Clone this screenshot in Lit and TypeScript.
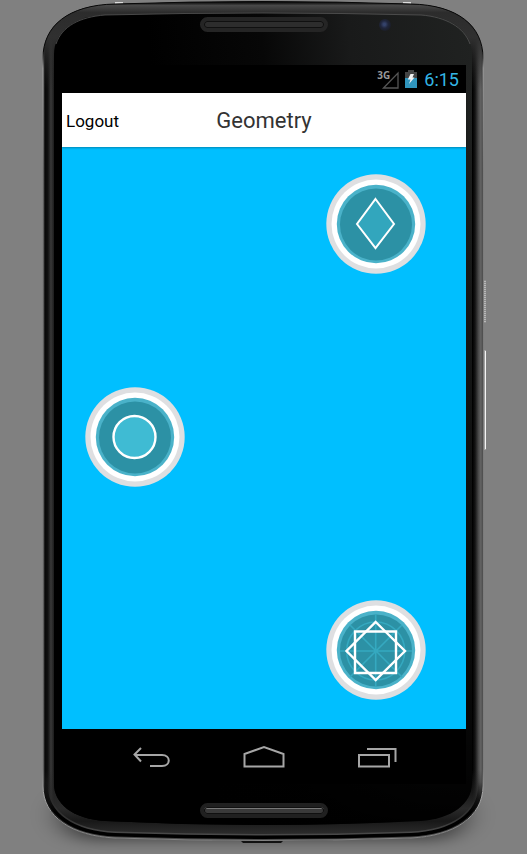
import { LitElement, html, svg, css } from "lit";
import { customElement, property } from "lit/decorators.js";

type Shape = "rhombus" | "circle" | "star";

const SHAPES: { shape: Shape; label: string; side: string }[] = [
  { shape: "rhombus", label: "Rhombus", side: "end" },
  { shape: "circle", label: "Circle", side: "start" },
  { shape: "star", label: "Star polygon", side: "end" },
];

/** Handset body: shadow, metal rim, glass and the side keys. */
@customElement("device-frame")
export class DeviceFrame extends LitElement {
  static styles = css`
    :host {
      display: block;
    }
    svg {
      display: block;
      width: 100%;
      height: 100%;
    }
  `;

  render() {
    const body =
      "M43 58 C43 26 68 5 115 4 Q263 -1 411 4 C458 5 483 26 483 58 V786 C483 817 454 836 411 838 Q263 843 115 838 C72 836 43 817 43 786 Z";
    const base = "M43 780 V786 C43 817 72 836 115 838 Q263 843 411 838 C454 836 483 817 483 786 V780";
    const glass =
      "M54 54 C54 34 72 16 105 15 Q263 11 421 15 C454 16 472 34 472 54 V784 C472 803 452 819 421 821 Q263 829 105 821 C72 819 54 803 54 784 Z";
    return html`
      <svg viewBox="0 0 527 854" preserveAspectRatio="none" aria-hidden="true">
        <defs>
          <linearGradient id="rim" x1="43" x2="483" y1="0" y2="0" gradientUnits="userSpaceOnUse">
            <stop offset="0" stop-color="#505050" />
            <stop offset="0.005" stop-color="#080808" />
            <stop offset="0.011" stop-color="#101010" />
            <stop offset="0.018" stop-color="#383838" />
            <stop offset="0.025" stop-color="#1c1c1c" />
            <stop offset="0.5" stop-color="#202020" />
            <stop offset="0.976" stop-color="#000" />
            <stop offset="0.982" stop-color="#141414" />
            <stop offset="0.99" stop-color="#4c4c4c" />
            <stop offset="0.996" stop-color="#686868" />
            <stop offset="1" stop-color="#101010" />
          </linearGradient>
          <linearGradient id="top" x1="0" x2="0" y1="2" y2="90" gradientUnits="userSpaceOnUse">
            <stop offset="0" stop-color="#080808" />
            <stop offset="0.04" stop-color="#484848" />
            <stop offset="0.12" stop-color="#2c2c2c" />
            <stop offset="0.4" stop-color="#303030" />
            <stop offset="1" stop-color="#242424" stop-opacity="0" />
          </linearGradient>
          <linearGradient id="bottom" x1="0" x2="0" y1="770" y2="834" gradientUnits="userSpaceOnUse">
            <stop offset="0" stop-color="#262626" stop-opacity="0" />
            <stop offset="0.6" stop-color="#2a2a2a" />
            <stop offset="0.8" stop-color="#181818" />
            <stop offset="1" stop-color="#2c2c2c" />
          </linearGradient>
          <linearGradient id="band" x1="0" x2="0" y1="782" y2="812" gradientUnits="userSpaceOnUse">
            <stop offset="0" stop-color="#000" stop-opacity="0" />
            <stop offset="1" stop-color="#000" />
          </linearGradient>
          <linearGradient id="lip" x1="0" x2="0" y1="800" y2="834" gradientUnits="userSpaceOnUse">
            <stop offset="0" stop-color="#484848" stop-opacity="0" />
            <stop offset="1" stop-color="#484848" />
          </linearGradient>
          <linearGradient id="shine" x1="150" x2="472" y1="60" y2="30" gradientUnits="userSpaceOnUse">
            <stop offset="0" stop-color="#000" />
            <stop offset="0.35" stop-color="#070707" />
            <stop offset="0.62" stop-color="#191a1a" />
            <stop offset="1" stop-color="#202221" />
          </linearGradient>
          <linearGradient id="fade" x1="0" x2="0" y1="80" y2="830" gradientUnits="userSpaceOnUse">
            <stop offset="0" stop-color="#000" stop-opacity="0" />
            <stop offset="0.85" stop-color="#000" stop-opacity="0.75" />
            <stop offset="1" stop-color="#000" />
          </linearGradient>
          <linearGradient id="edge" x1="0" x2="0" y1="0" y2="854" gradientUnits="userSpaceOnUse">
            <stop offset="0" stop-color="#080808" />
            <stop offset="0.06" stop-color="#080808" />
            <stop offset="0.08" stop-color="#a0a0a0" />
            <stop offset="0.2" stop-color="#777" />
            <stop offset="0.9" stop-color="#777" />
            <stop offset="0.93" stop-color="#aaa" />
            <stop offset="1" stop-color="#777" />
          </linearGradient>
          <clipPath id="inside"><path d=${body} /></clipPath>
          <filter id="soft" x="-20%" y="-100%" width="140%" height="300%">
            <feGaussianBlur stdDeviation="14 7" />
          </filter>
        </defs>
        <rect x="60" y="790" width="406" height="50" rx="30" fill="#000" opacity="0.5" filter="url(#soft)" />
        <path d="M484 280h2v43h-2z" fill="#8f8f8f" />
        <path d="M485 281v41" stroke="#e2e2e2" stroke-dasharray="1 1" />
        <path d="M484 350h2v100h-2z" fill="#a0a0a0" />
        <path d="M485.500 351v98" stroke="#f4f4f4" />
        <path d="M239 839h46l-4 4h-38z" fill="#111" />
        <path d="M115 3h8M403 3h8" stroke="#ddd" stroke-width="2" />
        <path d=${body} fill="url(#rim)" />
        <path d=${body} fill="url(#top)" />
        <path d=${body} fill="url(#bottom)" />
        <g clip-path="url(#inside)" fill="none">
          <path d=${base} stroke="url(#lip)" stroke-width="13" />
          <path d=${base} stroke="url(#band)" stroke-width="10" />
          <path d=${base} stroke="url(#lip)" stroke-width="3" />
        </g>
        <path d=${body} fill="none" stroke="url(#edge)" />
        <path d=${glass} fill="url(#shine)" />
        <path d=${glass} fill="url(#fade)" />
        <path d="M56 44 C62 26 80 17 105 15 Q263 11 421 15 C446 17 464 27 470 44" fill="none" stroke="#555" stroke-opacity="0.8" />
      </svg>
    `;
  }
}

/** Round badge with a geometric figure in its centre. */
@customElement("shape-badge")
export class ShapeBadge extends LitElement {
  @property() shape: Shape = "circle";
  @property() label = "";

  static styles = css`
    :host {
      display: block;
    }
    button {
      display: block;
      width: 100px;
      height: 100px;
      padding: 0;
      border: 0;
      border-radius: 50%;
      background: none;
      cursor: pointer;
    }
    svg {
      display: block;
    }
  `;

  private figure() {
    switch (this.shape) {
      case "rhombus":
        return svg`<path d="M49.5 25 L68 50 L49.5 74 L31 50 Z" fill="#32a6bd" stroke="#fff" stroke-width="2" />`;
      case "circle":
        return svg`<circle cx="49.5" cy="50" r="21" fill="#3fbbd3" stroke="#fff" stroke-width="2.4" />`;
      default:
        return svg`
          <g fill="none" stroke="#35a9c0" stroke-width="1.6">
            <circle cx="49.7" cy="51" r="29" />
            <path d="M49.7 14 V87 M14 51 H86 M24 25 L76 77 M76 25 L24 77" />
          </g>
          <g fill="none" stroke="#fff" stroke-width="2.4">
            <path d="M49.7 22 L79 51 L49.7 80 L20.500 51 Z" />
            <path d="M29 31.500 H70 V73 H29 Z" />
          </g>`;
    }
  }

  render() {
    return html`
      <button type="button" aria-label=${this.label}>
        <svg width="100" height="100" viewBox="0 0 100 100" aria-hidden="true">
          <circle cx="50" cy="50" r="49.7" fill="#dedfe1" />
          <circle cx="50" cy="50" r="44.5" fill="#fff" />
          <circle cx="50" cy="50" r="39.2" fill="#4ab2c9" />
          <circle cx="50" cy="50.500" r="36" fill="#2c91a5" />
          ${this.figure()}
        </svg>
      </button>
    `;
  }
}

@customElement("app-root")
export class AppRoot extends LitElement {
  static styles = css`
    :host {
      display: block;
      position: relative;
      min-height: 100vh;
      background: #808080;
      font-family: Roboto, "Noto Sans", sans-serif;
    }
    device-frame {
      position: absolute;
      inset: 0;
    }
    .phone {
      position: relative;
      display: flex;
      flex-direction: column;
      box-sizing: border-box;
      min-height: 100vh;
      padding: 0 61px 0 62px;
    }
    .bezel {
      display: grid;
      grid-template-columns: 1fr 128px 1fr;
      box-sizing: border-box;
    }
    .bezel.upper {
      height: 65px;
      padding-top: 17px;
    }
    .bezel.lower {
      height: 70px;
      padding-top: 19px;
    }
    .grille {
      grid-column: 2;
      box-sizing: border-box;
      height: 15px;
      border: 4px solid #252525;
      border-radius: 8px;
      background: #2d2d2d;
      box-shadow: inset 0 0 0 1px #101010;
    }
    .lower .grille {
      background: linear-gradient(#777 0 2px, #3a3a3a 2px);
      border-color: #202020;
    }
    .camera {
      width: 12px;
      height: 12px;
      margin: 2px 0 0 51px;
      border-radius: 50%;
      background: radial-gradient(circle at 45% 45%, #34426a 0 12%, #20263c 40%, #1b1e28 70%, #1b1c1d 100%);
    }
    .status {
      display: flex;
      justify-content: flex-end;
      align-items: center;
      box-sizing: border-box;
      height: 28px;
      padding-right: 7px;
      background: #000;
    }
    .signal {
      position: relative;
      width: 22px;
      height: 19px;
      margin-right: 6px;
    }
    .network {
      position: absolute;
      left: 0;
      top: 0;
      color: #999;
      font: 700 10px/10px "Noto Sans", sans-serif;
    }
    .status svg,
    .nav svg {
      display: block;
    }
    .clock {
      margin-left: 7px;
      padding-top: 2px;
      color: #33b5e5;
      font-size: 18px;
      line-height: 26px;
    }
    header {
      position: relative;
      z-index: 1;
      display: grid;
      grid-template-columns: 1fr auto 1fr;
      align-items: center;
      box-sizing: border-box;
      height: 54px;
      padding-top: 2px;
      background: #fff;
      box-shadow: 0 1px 2px rgba(0, 0, 0, 0.3);
    }
    .logout {
      justify-self: start;
      padding: 0 4px;
      border: 0;
      background: none;
      color: #000;
      font: 400 17px/24px Roboto, sans-serif;
      cursor: pointer;
    }
    h1 {
      margin: 0;
      color: #333;
      font-size: 22px;
      font-weight: 400;
      line-height: 52px;
    }
    main {
      display: flex;
      flex: 1;
      flex-direction: column;
      justify-content: space-between;
      gap: 24px;
      padding: 27px 40px 29px 23px;
      background: #00bfff;
    }
    .start {
      align-self: flex-start;
    }
    .end {
      align-self: flex-end;
    }
    .nav {
      display: flex;
      justify-content: center;
      gap: 72px;
      box-sizing: border-box;
      height: 55px;
      padding-top: 16px;
      background: #000;
    }
    .nav button {
      width: 42px;
      height: 24px;
      padding: 0;
      border: 0;
      background: none;
      cursor: pointer;
    }
  `;

  render() {
    return html`
      <device-frame></device-frame>
      <div class="phone">
        <div class="bezel upper">
          <div class="grille"></div>
          <div class="camera"></div>
        </div>
        <div class="status">
          <div class="signal">
            <span class="network">3G</span>
            <svg width="22" height="19" viewBox="0 0 22 19" aria-hidden="true">
              <path d="M6.500 18 L21 3 V18 Z" fill="none" stroke="#555" stroke-width="1.300" />
            </svg>
          </div>
          <svg width="12" height="18" viewBox="0 0 12 18" role="img" aria-label="Battery charging">
            <path d="M3 0h6v2h3v7H0V2h3z" fill="#444" />
            <path d="M0 8h12v10H0z" fill="#3095bd" />
            <path d="M5.500 4 H9 L7.500 7.500 H9.500 L4 14 L5.500 9.500 H2.800 Z" fill="#f2f2f2" />
          </svg>
          <span class="clock">6:15</span>
        </div>
        <header>
          <button class="logout" type="button">Logout</button>
          <h1>Geometry</h1>
        </header>
        <main>
          ${SHAPES.map(
            (s) => html`<shape-badge class=${s.side} .shape=${s.shape} .label=${s.label}></shape-badge>`
          )}
        </main>
        <nav class="nav" aria-label="System">
          <button type="button" aria-label="Back">
            <svg width="42" height="24" viewBox="0 0 42 24" fill="none" stroke="#a6a6a6" stroke-width="2" aria-hidden="true">
              <path d="M12 3 L5.500 9.500 L12 16.500 M5.500 10 H33 C42 10 42 21 33 21 H21" />
            </svg>
          </button>
          <button type="button" aria-label="Home">
            <svg width="42" height="24" viewBox="0 0 42 24" fill="none" stroke="#a6a6a6" stroke-width="2" aria-hidden="true">
              <path d="M1.500 21.500 V9 L21 2 L40.500 9 V21.500 Z" />
            </svg>
          </button>
          <button type="button" aria-label="Recent apps">
            <svg width="42" height="24" viewBox="0 0 42 24" fill="none" stroke="#a6a6a6" stroke-width="2" aria-hidden="true">
              <path d="M2 10 H32 V21.500 H2 Z M10 4 H38.500 V17" />
            </svg>
          </button>
        </nav>
        <div class="bezel lower">
          <div class="grille"></div>
        </div>
      </div>
    `;
  }
}
